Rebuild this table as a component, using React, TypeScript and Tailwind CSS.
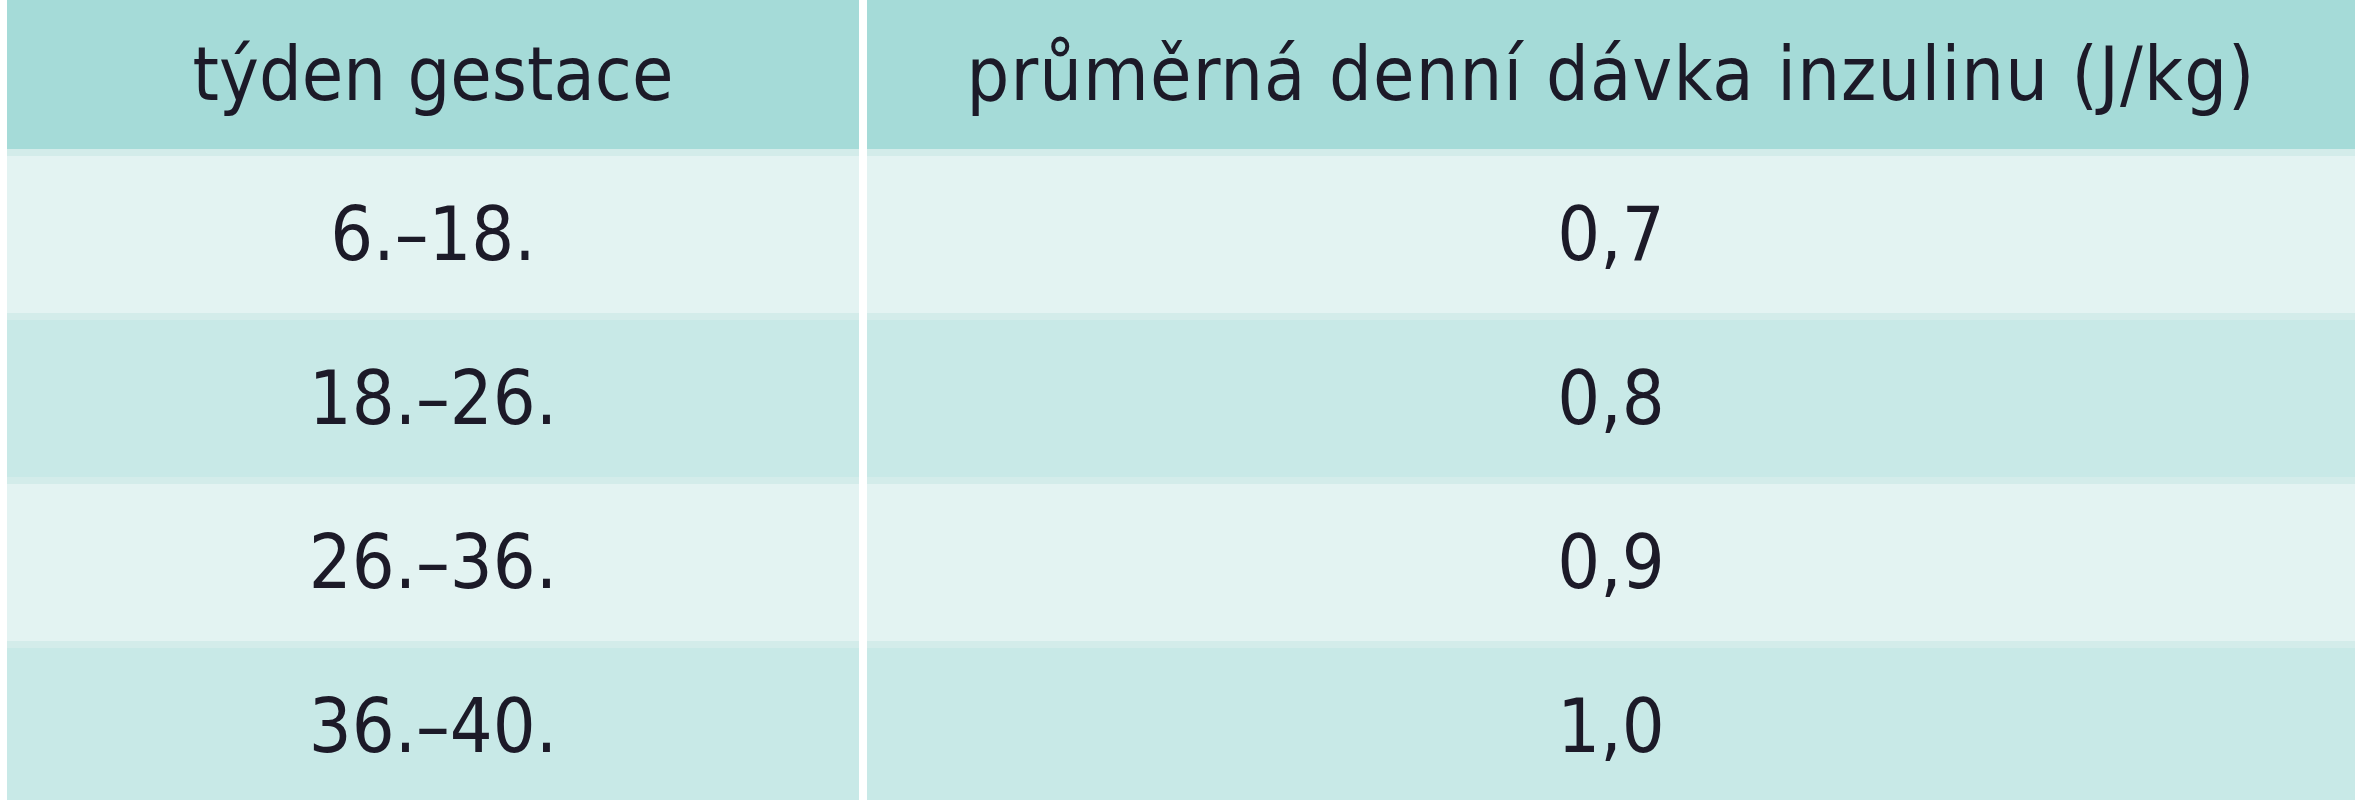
const ROWS = [
  { week: "6.–18.", dose: "0,7" },
  { week: "18.–26.", dose: "0,8" },
  { week: "26.–36.", dose: "0,9" },
  { week: "36.–40.", dose: "1,0" },
];

export default function App() {
  return (
    <div className="w-[2355px] h-[800px] overflow-hidden bg-white pl-[7px] font-['DejaVu_Sans_Condensed','DejaVu_Sans',sans-serif] font-stretch-condensed text-[75px] text-[#1c1a28] leading-none">
      <div className="grid grid-cols-[852px_1fr] gap-x-[8px]">
        {/* header */}
        <div className="h-[149px] bg-[#a5dbd8] flex items-center justify-center">týden gestace</div>
        <div className="h-[149px] bg-[#a5dbd8] flex items-center justify-center tracking-[0.015em]">
          průměrná denní dávka inzulinu (J/kg)
        </div>

        {ROWS.map((r, i) => {
          const bg = i % 2 === 0 ? "bg-[#e3f3f2]" : "bg-[#c8e9e7]";
          return [
            <div key={`w${i}`} className={`h-[164px] border-t-[7px] border-[#d3ecea] ${bg} flex items-center justify-center`}>
              {r.week}
            </div>,
            <div key={`d${i}`} className={`h-[164px] border-t-[7px] border-[#d3ecea] ${bg} flex items-center justify-center`}>
              {r.dose}
            </div>,
          ];
        })}
      </div>
    </div>
  );
}
